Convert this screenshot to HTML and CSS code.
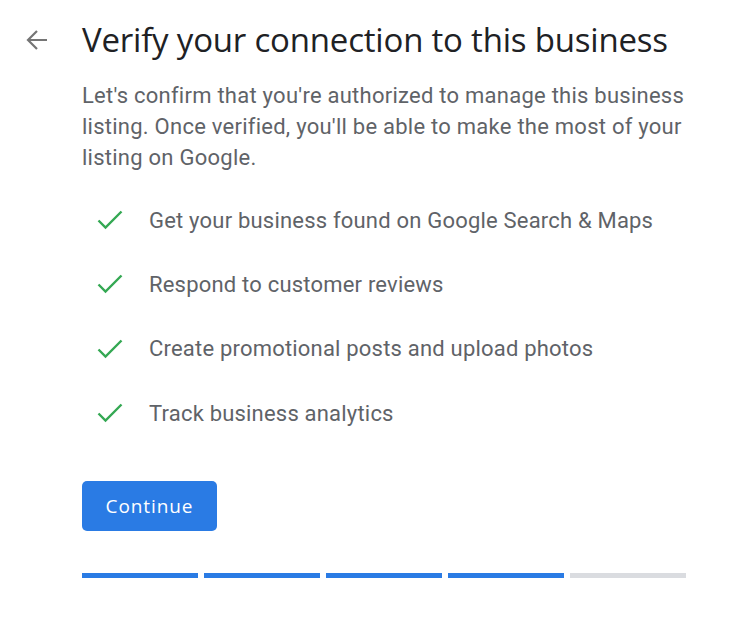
FILE: index.html
```html
<!DOCTYPE html>
<html>
<head>
<meta charset="utf-8">
<link rel="stylesheet" href="styles.css">
</head>
<body>
<div class="page">
  <header class="head">
    <button class="back" aria-label="Back">
      <svg width="24" height="24" viewBox="0 0 24 24"><path d="M22 12H3M12 3l-9 9 9 9" fill="none" stroke="#757575" stroke-width="2.2"/></svg>
    </button>
    <h1 class="title">Verify your connection to this business</h1>
  </header>
  <div class="content">
    <p class="intro">Let's confirm that you're authorized to manage this business listing. Once verified, you'll be able to make the most of your listing on Google.</p>
    <ul class="benefits">
      <li class="benefit"><svg class="check" width="26" height="20" viewBox="0 0 26 20"><path d="M1.5 10.5L8.5 17.5L24.5 1.5" fill="none" stroke="#34a853" stroke-width="2.4"/></svg><span>Get your business found on Google Search &amp; Maps</span></li>
      <li class="benefit"><svg class="check" width="26" height="20" viewBox="0 0 26 20"><path d="M1.5 10.5L8.5 17.5L24.5 1.5" fill="none" stroke="#34a853" stroke-width="2.4"/></svg><span>Respond to customer reviews</span></li>
      <li class="benefit"><svg class="check" width="26" height="20" viewBox="0 0 26 20"><path d="M1.5 10.5L8.5 17.5L24.5 1.5" fill="none" stroke="#34a853" stroke-width="2.4"/></svg><span>Create promotional posts and upload photos</span></li>
      <li class="benefit"><svg class="check" width="26" height="20" viewBox="0 0 26 20"><path d="M1.5 10.5L8.5 17.5L24.5 1.5" fill="none" stroke="#34a853" stroke-width="2.4"/></svg><span>Track business analytics</span></li>
    </ul>
    <button class="continue">Continue</button>
    <div class="progress">
      <span class="seg done"></span>
      <span class="seg done"></span>
      <span class="seg done"></span>
      <span class="seg done"></span>
      <span class="seg"></span>
    </div>
  </div>
</div>
</body>
</html>
```
FILE: styles.css
```css
html, body {
  margin: 0;
  padding: 0;
  background: #ffffff;
}
.page {
  width: 740px;
  height: 618px;
  box-sizing: border-box;
  padding-top: 20px;
  font-family: Roboto, "Liberation Sans", sans-serif;
}
.head {
  display: flex;
  align-items: center;
}
.back {
  width: 24px;
  height: 24px;
  margin-left: 25px;
  margin-right: 33px;
  padding: 0;
  border: 0;
  background: none;
  display: flex;
}
.title {
  margin: 0;
  font-family: "Open Sans", Roboto, sans-serif;
  font-weight: 400;
  font-size: 33px;
  line-height: 40px;
  color: #202124;
  letter-spacing: -0.2px;
}
.content {
  padding-left: 82px;
  width: 604px;
}
.intro {
  margin: 20px 0 0 0;
  font-size: 22px;
  line-height: 31px;
  letter-spacing: 0.25px;
  color: #5f6368;
}
.benefits {
  list-style: none;
  margin: 33px 0 0 0;
  padding: 0;
  display: flex;
  flex-direction: column;
  gap: 36px;
}
.benefit {
  display: flex;
  align-items: center;
  height: 28.3px;
  font-size: 22px;
  letter-spacing: 0.2px;
  color: #5f6368;
}
.check {
  margin-left: 15px;
  margin-right: 26px;
}
.continue {
  margin-top: 54px;
  width: 135px;
  height: 50px;
  border: 0;
  border-radius: 5px;
  background: #2a7be4;
  color: #ffffff;
  font-family: "Open Sans", sans-serif;
  font-weight: 500;
  font-size: 19px;
  letter-spacing: 0.9px;
  padding: 0;
}
.progress {
  display: flex;
  gap: 6px;
  margin-top: 42px;
}
.seg {
  flex: 1;
  height: 5px;
  background: #dadce0;
}
.seg.done {
  background: #2a7be4;
}
```
